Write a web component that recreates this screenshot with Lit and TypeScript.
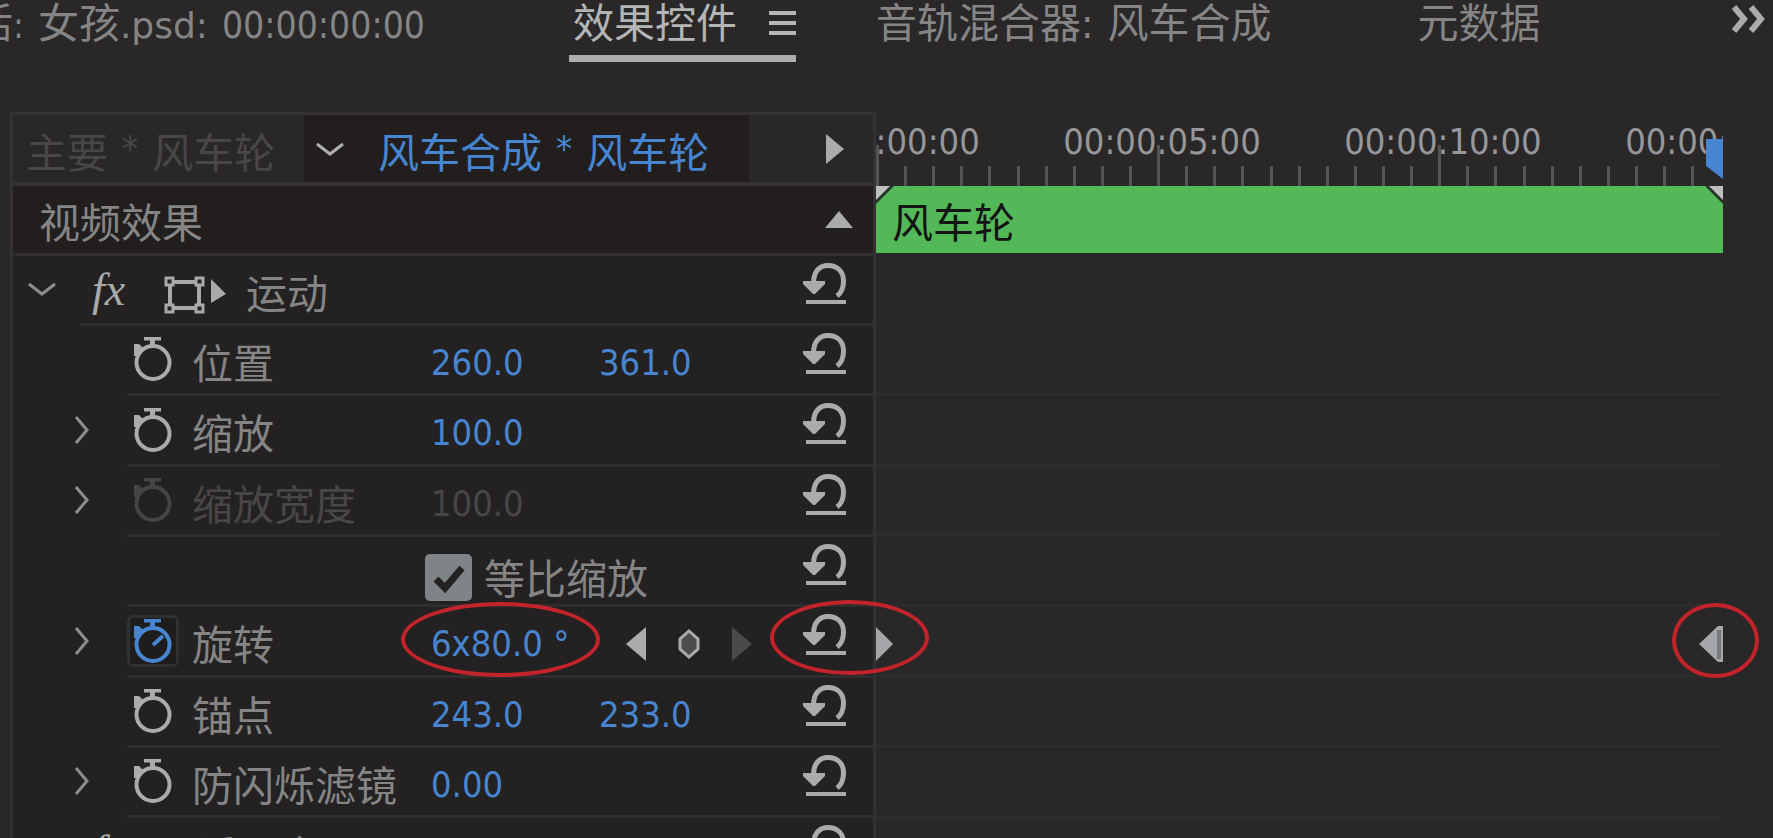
import { LitElement, html, css, svg, nothing } from "lit";
import { customElement } from "lit/decorators.js";
import { classMap } from "lit/directives/class-map.js";

interface Param {
  label?: string;
  values?: string[];
  expand?: boolean;
  dim?: boolean;
  check?: string;
  animated?: boolean;
}

const PARAMS: Param[] = [
  { label: "位置", values: ["260.0", "361.0"] },
  { label: "缩放", values: ["100.0"], expand: true },
  { label: "缩放宽度", values: ["100.0"], expand: true, dim: true },
  { check: "等比缩放" },
  { label: "旋转", values: ["6x80.0 °"], expand: true, animated: true },
  { label: "锚点", values: ["243.0", "233.0"] },
  { label: "防闪烁滤镜", values: ["0.00"], expand: true },
];

const TICKS = Array.from({ length: 31 }, (_, i) => i);
const LABELS = ["00:00:00:00", "00:00:05:00", "00:00:10:00", "00:00:15:00"];

const chevronDown = html`<svg class="icon" width="30" height="16" viewBox="0 0 30 16">
  <path d="M2 3 L15 13 L28 3" fill="none" stroke="currentColor" stroke-width="3" />
</svg>`;

const chevronRight = html`<svg class="icon" width="16" height="30" viewBox="0 0 16 30">
  <path d="M2 2 L13 15 L2 28" fill="none" stroke="currentColor" stroke-width="3" />
</svg>`;

const resetIcon = html`<svg class="icon" width="43" height="41" viewBox="0 0 43 41">
  <path d="M10.5 20 C10.5 8 17 2.5 25 2.5 C35 2.5 40.5 9 40.5 18 C40.5 26 38 30 34 33" fill="none" stroke="currentColor" stroke-width="5" />
  <path d="M0 18 H22 V21 L12 31 H10 L0 21 Z" fill="currentColor" />
  <rect x="3" y="37" width="40" height="4" fill="currentColor" />
</svg>`;

const stopwatch = (on: boolean) => svg`<svg class="icon" width="38" height="45" viewBox="0 0 38 45">
  <path d="M10 0 H27 V3.5 H21 V9 H16 V3.5 H10 Z" fill="currentColor" />
  <path d="M0 7 H5 L9 11 L4 19 H0 Z" fill="currentColor" />
  <circle cx="19" cy="25.5" r="16.5" fill="none" stroke="currentColor" stroke-width="4" />
  ${on ? svg`<path d="M19 26 L29 17" stroke="currentColor" stroke-width="4" />` : nothing}
</svg>`;

@customElement("effect-param")
class EffectParam extends LitElement {
  static properties = { param: { attribute: false } };
  declare param: Param;

  static styles = css`
    :host {
      display: grid;
      grid-template-columns: 114px 1fr;
      box-sizing: border-box;
      color: #858585;
      font: 36px/48px "DejaVu Sans Condensed", "Noto Sans", "Noto Sans CJK SC", sans-serif;
    }
    * { box-sizing: border-box; }
    .icon { display: block; }
    button {
      display: grid;
      place-items: center;
      margin: 0;
      padding: 0;
      border: 0;
      background: none;
      color: #a9abac;
      font: inherit;
    }
    .twirl {
      justify-self: start;
      align-self: center;
      margin-left: 61px;
      padding-bottom: 4px;
      color: #8e8c8c;
    }
    .main {
      display: grid;
      grid-template-columns: 65px 233px 168px 1fr auto;
      align-items: center;
      border-bottom: 3px solid #2f2d2e;
      padding-right: 27px;
    }
    .watch {
      justify-self: start;
      width: 52px;
      height: 52px;
      border-radius: 6px;
    }
    .watch.on {
      color: #4785d1;
      background: #1e1c1c;
      box-shadow: inset 0 0 0 3px #2e3032;
    }
    .label {
      font-size: 41px;
      white-space: nowrap;
      padding-top: 10px;
    }
    .cell { position: relative; padding: 6px 0 0 6px; }
    input[type="text"] {
      display: block;
      width: 100%;
      height: 48px;
      margin: 0;
      padding: 0;
      border: 0;
      outline: 0;
      background: none;
      color: #4785d1;
      font: inherit;
    }
    .dim .label, .dim input[type="text"] { color: #484647; }
    .dim .watch { color: #464445; }
    .nav {
      display: flex;
      align-items: center;
      gap: 31px;
      padding: 6px 0 0 33px;
    }
    .nav .off { color: #4a494b; }
    .reset { grid-column: 5; position: relative; align-self: start; margin-top: 7px; }
    .check {
      grid-column: 1 / 5;
      display: flex;
      align-items: center;
      gap: 12px;
      padding: 14px 0 0 298px;
      font-size: 41px;
    }
    .check .text { padding-top: 4px; }
    .box { position: relative; display: grid; width: 47px; height: 47px; }
    .box input {
      appearance: none;
      margin: 0;
      border-radius: 5px;
      background: #7f8487;
    }
    .box svg { position: absolute; inset: 0; pointer-events: none; }
    .ring {
      position: absolute;
      z-index: 2;
      height: 75px;
      border: 4px solid #c3242b;
      border-radius: 50%;
      pointer-events: none;
    }
    .ring.value { left: -24px; top: -12px; width: 199px; }
    .ring.back { left: -33px; top: -14px; width: 159px; }
  `;

  render() {
    const p = this.param;
    return html`
      ${p.expand
        ? html`<button class="twirl" aria-label="展开">${chevronRight}</button>`
        : html`<span></span>`}
      <div class=${classMap({ main: true, dim: !!p.dim })}>
        ${p.check
          ? html`<label class="check">
              <span class="box">
                <input type="checkbox" checked />
                <svg width="47" height="47" viewBox="0 0 47 47">
                  <path d="M11 25 L20 34 L37 14" fill="none" stroke="#242222" stroke-width="7" />
                </svg>
              </span>
              <span class="text">${p.check}</span>
            </label>`
          : html`
              <button class=${classMap({ watch: true, on: !!p.animated })} aria-label="切换动画">
                ${stopwatch(!!p.animated)}
              </button>
              <span class="label">${p.label}</span>
              ${p.values!.map(
                (v) => html`<div class="cell">
                  <input type="text" aria-label=${p.label!} .value=${v} ?disabled=${!!p.dim} />
                  ${p.animated ? html`<span class="ring value"></span>` : nothing}
                </div>`
              )}
              ${p.animated
                ? html`<div class="nav">
                    <button aria-label="上一关键帧">
                      <svg class="icon" width="20" height="34"><path d="M20 0 V34 L0 17 Z" fill="currentColor" /></svg>
                    </button>
                    <button aria-label="添加关键帧">
                      <svg class="icon" width="24" height="30">
                        <path d="M12 2 L21 10 V20 L12 28 L3 20 V10 Z" fill="#4c4b4e" stroke="currentColor" stroke-width="3" />
                      </svg>
                    </button>
                    <button class="off" aria-label="下一关键帧">
                      <svg class="icon" width="20" height="34"><path d="M0 0 V34 L20 17 Z" fill="currentColor" /></svg>
                    </button>
                  </div>`
                : nothing}
            `}
        <button class="reset" aria-label="重置">
          ${resetIcon}${p.animated ? html`<span class="ring back"></span>` : nothing}
        </button>
      </div>
    `;
  }
}

@customElement("app-root")
class AppRoot extends LitElement {
  static styles = css`
    :host {
      display: flex;
      flex-direction: column;
      height: 100vh;
      overflow: hidden;
      background: #292728;
      color: #858585;
      font: 36px/48px "DejaVu Sans Condensed", "Noto Sans", "Noto Sans CJK SC", sans-serif;
    }
    * { box-sizing: border-box; }
    button {
      display: grid;
      place-items: center;
      margin: 0;
      padding: 0;
      border: 0;
      background: none;
      color: #a9abac;
      font: inherit;
    }
    .icon { display: block; }
    .zh { font-size: 41px; }

    .tabs {
      display: flex;
      flex: none;
      height: 62px;
      white-space: nowrap;
    }
    .tab { display: flex; align-items: flex-start; color: inherit; }
    .source { width: 425px; justify-content: flex-end; align-items: baseline; }
    .source .gap { margin-right: 14px; }
    .ext { font-family: "DejaVu Sans", sans-serif; }
    .code { font-size: 37px; }
    .active {
      margin: 0 80px 0 144px;
      width: 227px;
      padding-left: 4px;
      justify-content: space-between;
      border-bottom: 7px solid #abaeae;
      color: #b4b6b6;
    }
    .active svg { margin-top: 11px; }
    .mixer { gap: 14px; }
    .meta { margin-left: 146px; }
    .more { margin: 5px 8px 0 auto; align-self: flex-start; }

    .body {
      display: grid;
      grid-template-columns: 866px 1fr;
      flex: 1;
      min-height: 0;
      margin: 50px 50px 0 10px;
    }
    .panel {
      position: relative;
      z-index: 1;
      border: solid #333132;
      border-width: 3px 3px 0;
      background: #232121;
      min-height: 0;
    }
    .crumbs {
      display: flex;
      height: 71px;
      background: #292728;
      border-bottom: 4px solid #333132;
      white-space: nowrap;
    }
    .crumb { display: flex; align-items: center; gap: 14px; }
    .crumb .zh { padding-top: 10px; }
    .master { width: 291px; padding-left: 13px; color: #484647; }
    .sequence { width: 445px; padding-left: 11px; background: #211e1d; color: #4785d1; }
    .sequence .twist { margin-right: 19px; color: #b0b0b0; }
    .go { margin: 0 29px 0 auto; }

    .row { height: 70px; }
    .row:nth-child(3n + 5) { height: 71px; }
    .section {
      display: flex;
      align-items: center;
      justify-content: space-between;
      padding: 0 20px 0 26px;
      border-bottom: 3px solid #2f2d2e;
      background: #211e1d;
    }
    .section .zh { padding-top: 8px; }
    .group { display: grid; grid-template-columns: 67px 1fr; }
    .group .twist { align-self: start; margin: 25px 0 0 14px; color: #8e8c8c; justify-self: start; }
    .head {
      display: flex;
      align-items: center;
      padding-right: 27px;
      border-bottom: 3px solid #2f2d2e;
      font-size: 41px;
    }
    .fx { width: 75px; padding-left: 12px; font: italic 46px/48px "Liberation Serif", serif; color: #a9abab; }
    .motion { margin: 10px 20px 0 9px; }
    .name { padding-top: 10px; }
    .reset { align-self: start; margin: 7px 0 0 auto; }

    .time { min-width: 0; position: relative; display: grid; grid-auto-rows: max-content; align-content: start; }
    .ruler { height: 74px; position: relative; overflow: hidden; }
    .stamps { display: flex; margin-left: -16%; padding-top: 6px; color: #96979a; }
    .stamp { flex: none; width: 28.6%; text-align: center; }
    .ticks {
      position: absolute;
      inset: auto 0 0 0;
      display: flex;
      align-items: flex-end;
      height: 42px;
    }
    .tick { flex: 28 0 0; height: 20px; border-left: 3px solid #555355; }
    .tick.major { height: 41px; }
    .tick.last { flex-grow: 4; border: 0; }
    .playhead { position: absolute; right: 0; top: 27px; }
    .clip {
      position: relative;
      border-bottom: 3px solid #292728;
      padding: 14px 0 0 16px;
      background: #53b857;
      background-clip: padding-box;
      color: #121512;
    }
    .corner { position: absolute; top: 0; }
    .corner.l { left: 0; }
    .corner.r { right: 0; }
    .lane {
      position: relative;
      display: flex;
      justify-content: space-between;
      align-items: center;
      padding-top: 6px;
      border-bottom: 3px solid #2d2b2c;
      color: #a4a6a9;
    }
    .lane.open { border-color: transparent; }
    .ring {
      position: absolute;
      right: -36px;
      top: -4px;
      width: 87px;
      height: 75px;
      border: 4px solid #c3242b;
      border-radius: 50%;
    }
  `;

  render() {
    return html`
      <nav class="tabs">
        <button class="tab source">
          <span class="gap"><span class="zh">活</span>:</span>
          <span class="zh">女孩</span>
          <span class="ext gap">.psd:</span>
          <span class="code">00:00:00:00</span>
        </button>
        <button class="tab active">
          <span class="zh">效果控件</span>
          <svg class="icon" width="27" height="24"><path d="M0 2H27M0 12H27M0 22H27" stroke="currentColor" stroke-width="4" /></svg>
        </button>
        <button class="tab zh mixer"><span>音轨混合器:</span><span>风车合成</span></button>
        <button class="tab zh meta">元数据</button>
        <button class="more" aria-label="更多">
          <svg class="icon" width="33" height="28" viewBox="0 0 33 28">
            <path d="M2 2 L12 14 L2 26 M19 2 L29 14 L19 26" fill="none" stroke="currentColor" stroke-width="6" />
          </svg>
        </button>
      </nav>
      <div class="body">
        <section class="panel">
          <div class="crumbs">
            <div class="crumb master"><span class="zh">主要</span><span>*</span><span class="zh">风车轮</span></div>
            <div class="crumb sequence">
              <button class="twist" aria-label="选择序列">${chevronDown}</button>
              <span class="zh">风车合成</span><span>*</span><span class="zh">风车轮</span>
            </div>
            <button class="go" aria-label="显示时间轴">
              <svg class="icon" width="18" height="30"><path d="M0 0 V30 L18 15 Z" fill="currentColor" /></svg>
            </button>
          </div>
          <div class="row section">
            <span class="zh">视频效果</span>
            <svg class="icon" width="28" height="17"><path d="M0 17 H28 L14 0 Z" fill="#a9abac" /></svg>
          </div>
          ${this.group("运动", true)}
          ${PARAMS.map((p) => html`<effect-param class="row" .param=${p}></effect-param>`)}
          ${this.group("不透明度", false)}
        </section>
        <section class="time">
          <div class="ruler">
            <div class="stamps">${LABELS.map((l) => html`<span class="stamp">${l}</span>`)}</div>
            <div class="ticks">
              ${TICKS.map((i) => html`<i class=${classMap({ tick: true, major: i % 10 === 0, last: i === 30 })}></i>`)}
            </div>
            <svg class="playhead" width="17" height="40"><path d="M0 0 H17 V40 L0 27 Z" fill="#4785d1" /></svg>
          </div>
          <div class="row clip">
            <span class="zh">风车轮</span>
            <svg class="corner l" width="18" height="18"><path d="M0 0 H18 L0 18 Z" fill="#253525" /><path d="M0 0 H14 L0 14 Z" fill="#c0bfc0" /></svg>
            <svg class="corner r" width="18" height="18"><path d="M0 0 H18 V18 Z" fill="#253525" /><path d="M4 0 H18 V14 Z" fill="#c0bfc0" /></svg>
          </div>
          <div class="row lane open"></div>
          ${PARAMS.map(
            (p) => html`<div class="row lane">
              ${p.animated
                ? html`<svg class="icon" width="17" height="34"><path d="M0 0 V34 L17 17 Z" fill="currentColor" /></svg>
                    <svg class="icon" width="24" height="36"><path d="M19 0 H24 V36 H19 L0 18 Z" fill="currentColor" /><path d="M18 4 H22 V33 H18 Z" fill="#777b80" /></svg>
                    <span class="ring"></span>`
                : nothing}
            </div>`
          )}
        </section>
      </div>
    `;
  }

  private group(name: string, box: boolean) {
    return html`<div class="row group">
      <button class="twist" aria-label="折叠">${chevronDown}</button>
      <div class="head">
        <span class="fx">fx</span>
        ${box
          ? html`<svg class="icon motion" width="62" height="38" viewBox="0 0 62 38">
              <path d="M6 6 H35 V32 H6 Z" fill="none" stroke="#a9a9a9" stroke-width="4" />
              <path d="M2 2 H9 V9 H2 Z M32 2 H39 V9 H32 Z M2 29 H9 V36 H2 Z M32 29 H39 V36 H32 Z" fill="#232121" stroke="#a9a9a9" stroke-width="3" />
              <path d="M47 3 V27 L62 18 Z" fill="#a9a9a9" />
            </svg>`
          : nothing}
        <span class="name">${name}</span>
        <button class="reset" aria-label="重置">${resetIcon}</button>
      </div>
    </div>`;
  }
}
